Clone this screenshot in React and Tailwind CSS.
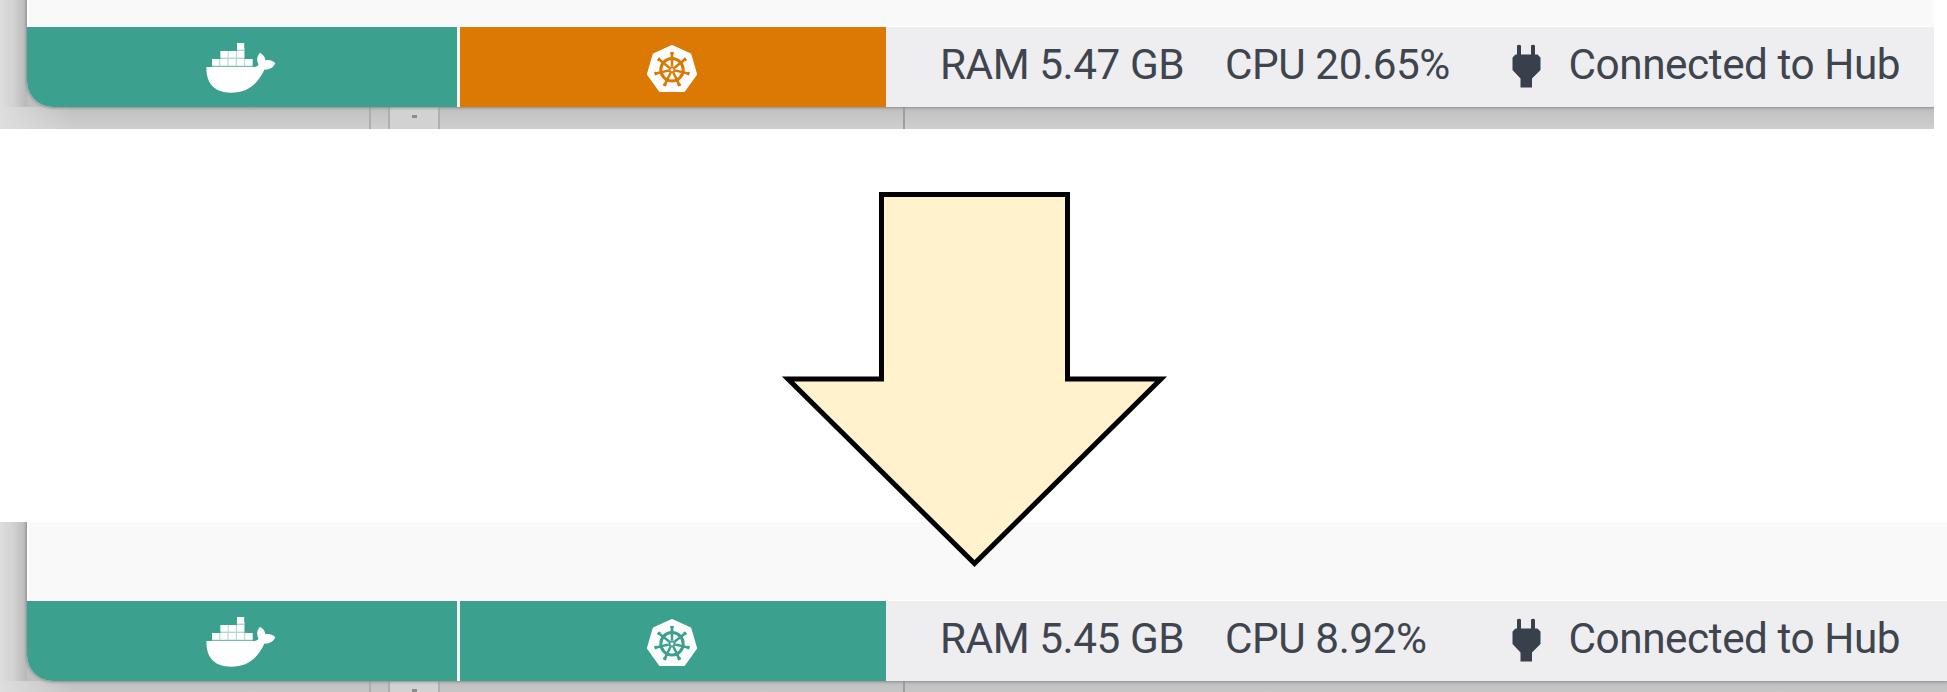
function DockerIcon() {
  const boxes = [
    [31, 0],
    [14.5, 8], [22.7, 8], [31, 8],
    [6, 16], [14.3, 16], [22.6, 16], [30.9, 16], [39.2, 16],
  ];
  return (
    <svg className="h-[50px] w-[70px]" viewBox="0 0 70 50" fill="white">
      <path d="M14.5 8H38.600V14.500H14.500ZM6 16H46.800V23.500H6ZM31 5H38.600V9H31ZM14.500 14H38.600V17H14.500Z" opacity="0.6" />
      {boxes.map(([x, y]) => (
        <rect key={`${x}-${y}`} x={x} y={y} width="7.2" height="6.6" />
      ))}
      <path d="M0.4 24H47C50 24 52 23.500 52.500 21.500C50.500 17.500 50.500 14 54 9.800C57.500 12 59 14 59.300 17.300C63 16.500 66.500 17.500 69.300 20.300C67.500 24.500 63.500 27 58.500 26.500C51 42 41 49.700 25 49.700C9 49.700 0 41 0.400 24Z" />
    </svg>
  );
}

function KubernetesIcon() {
  const spokes = [0, 1, 2, 3, 4, 5, 6];
  return (
    <svg className="h-[49px] w-[52px]" viewBox="0 0 52 49">
      <path
        d="M26 3L43.500 11L49 30L37.500 46H14.500L3 30L8.500 11Z"
        fill="white"
        stroke="white"
        strokeWidth="4"
        strokeLinejoin="round"
      />
      <g fill="none" stroke="currentColor" strokeWidth="3">
        <circle cx="26" cy="25.800" r="11.200" />
        {spokes.map((i) => (
          <g key={i} transform={`rotate(${(i * 360) / 7} 26 25.800)`}>
            <path d="M26 22.500V13" strokeWidth="2.500" />
            <path d="M26 15V8" strokeWidth="2.700" />
            <path d="M24.300 9H27.700" strokeWidth="2" />
          </g>
        ))}
        <circle cx="26" cy="25.800" r="2.500" strokeWidth="1.800" />
      </g>
    </svg>
  );
}

function PlugIcon() {
  return (
    <svg className="h-[44px] w-[29px] shrink-0" viewBox="0 0 29 44" fill="#38404b">
      <path d="M5 1.500Q7 0 9 1.500V10.500H19V1.500Q21 0 23 1.500V10.500H25.500L28.500 13.500V26L20 34.500V43.500H8.500V34.500L0.500 26V13.500L3.500 10.500H5Z" />
    </svg>
  );
}

function Status({ ram, cpu, kubeColor }) {
  return (
    <div className="flex h-20 bg-[#eeeef1]">
      <div className="flex w-[430px] shrink-0 items-center justify-center bg-[#3ba08d] pt-px pr-0.5">
        <DockerIcon />
      </div>
      <div className="w-[2.5px] shrink-0 bg-[#f1f3f4]" />
      <div className={`flex w-[426.5px] shrink-0 items-center justify-center pt-0.5 pr-px ${kubeColor}`}>
        <KubernetesIcon />
      </div>
      <div className="flex items-center pb-[3px] pl-[54px] whitespace-nowrap">
        <span className="w-[285px]">{ram}</span>
        <span className="w-[287px]">{cpu}</span>
        <PlugIcon />
        <span className="ml-[27.5px]">Connected to Hub</span>
      </div>
    </div>
  );
}

function Desktop() {
  return (
    <div className="flex h-[22px] bg-linear-to-b from-[#bfbfbf] to-[#cfcfcf]">
      <div className="w-[369px] shrink-0 bg-linear-to-r from-[#dedede] to-transparent to-20%" />
      <div className="w-[21px] border-x-2 border-[#aeaeae]" />
      <div className="flex h-[22px] w-[48px] justify-center bg-[#d2d2d2] pt-2">
        <div className="h-[3px] w-[5px] bg-[#8c8c8c]" />
      </div>
      <div className="w-[467px] border-x-2 border-r-[#9e9e9e] border-l-[#b0b0b0]" />
    </div>
  );
}

function Capture({ panel, size, ...status }) {
  return (
    <section className={`isolate overflow-hidden bg-[#c7c7c7] ${size}`}>
      <div className="flex bg-[#c0c0c0]">
        <div className="w-[27px] shrink-0 bg-linear-to-r from-[#dedede] via-[#d2d2d2] to-[#b8b8b8]" />
        <div className="relative z-10 grow overflow-hidden rounded-bl-[26px] shadow-[0_0_3px_1px_#8c8c8c]">
          <div className={`border-b border-l-2 border-white bg-[#f9f9f9] ${panel}`} />
          <Status {...status} />
        </div>
      </div>
      <Desktop />
    </section>
  );
}

export default function App() {
  return (
    <main className="relative h-[692px] w-[1947px] overflow-hidden bg-white font-['Roboto',sans-serif] text-[42.3px] leading-none tracking-[-0.45px] text-[#3e454f]">
      <Capture size="h-[129px] w-[1934px]" panel="h-[27px]" ram="RAM 5.47 GB" cpu="CPU 20.65%" kubeColor="bg-[#dc7804] text-[#dc7804]" />
      <div className="h-[393px]" />
      <Capture size="h-[170px] w-[1947px]" panel="h-[79px]" ram="RAM 5.45 GB" cpu="CPU 8.92%" kubeColor="bg-[#3ba08d] text-[#3ba08d]" />
      <svg className="absolute top-[180px] left-[770px] z-20 h-[400px] w-[410px]" viewBox="0 0 410 400">
        <path d="M111.500 14.500H297.500V199H391L204.500 383.500L18 199H111.500Z" fill="#fff2cc" stroke="black" strokeWidth="5" strokeMiterlimit="10" />
      </svg>
    </main>
  );
}
